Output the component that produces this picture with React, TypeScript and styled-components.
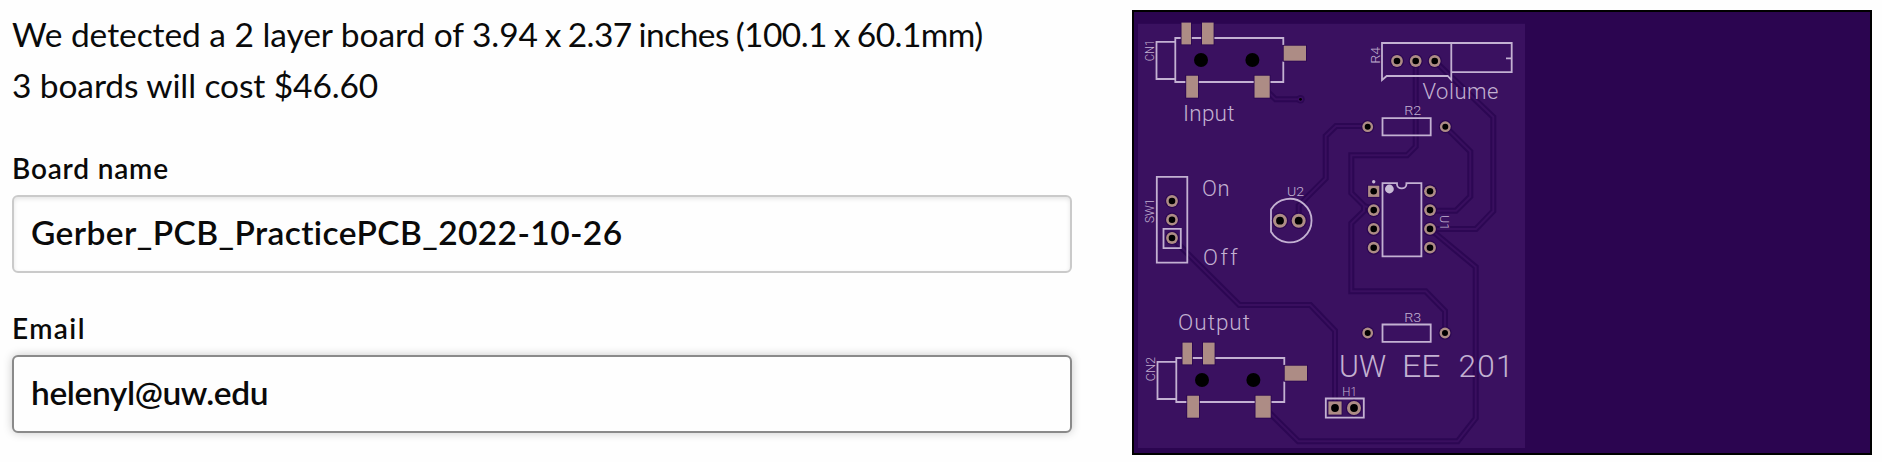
import React from 'react';
import styled, { createGlobalStyle } from 'styled-components';

const GlobalStyle = createGlobalStyle`
  *, *::before, *::after { box-sizing: border-box; }
  body {
    margin: 0;
    background: #fefefe;
    color: #0a0a0a;
    font-family: Lato, "Open Sans", sans-serif;
  }
`;

const Page = styled.main`
  display: flex;
  align-items: flex-start;
  justify-content: space-between;
  height: 462px;
  padding: 10px 10px 7px 12px;
  overflow: hidden;
`;

const Details = styled.section`
  display: flex;
  flex-direction: column;
  width: 1060px;
`;

const Summary = styled.div`
  height: 138px;
  margin-top: -1px;
`;

const SummaryLine = styled.p<{ $tracking: number }>`
  margin: 0;
  font-size: 33.5px;
  line-height: 51px;
  white-space: nowrap;
  letter-spacing: ${(p) => p.$tracking}px;
`;

const Dimensions = styled.span`
  letter-spacing: -0.55px;
  word-spacing: -1.2px;
`;

const Field = styled.div`
  display: flex;
  flex-direction: column;
  height: 160px;
`;

const Label = styled.label<{ $tracking: number }>`
  height: 48px;
  font-size: 28px;
  font-weight: 600;
  line-height: 42px;
  letter-spacing: ${(p) => p.$tracking}px;
`;

const TextInput = styled.input<{ $tracking: number; $active?: boolean }>`
  width: 100%;
  height: 78px;
  padding: 0 16px 4px 17px;
  border: 2px solid ${(p) => (p.$active ? '#8a8a8a' : '#cacaca')};
  border-radius: 6px;
  outline: none;
  background: #fefefe;
  box-shadow: ${(p) =>
    p.$active ? '0 0 10px #cacaca' : 'inset 0 2px 4px rgba(10, 10, 10, 0.1)'};
  color: #0a0a0a;
  font-family: inherit;
  font-size: 33.5px;
  font-weight: 600;
  letter-spacing: ${(p) => p.$tracking}px;
`;

const BoardFrame = styled.figure`
  width: 740px;
  height: 445px;
  margin: 0;
  border: 2px solid #000;
  background: #2b0550;
`;

const BoardDrawing = styled.svg`
  display: block;
  width: 736px;
  height: 441px;
`;

const Outline = styled.path`
  fill: none;
  stroke: #c3b1d2;
  stroke-width: 1.8;
`;

const SilkText = styled.text<{ $weight: number }>`
  fill: #c3b1d2;
  font-family: Roboto, sans-serif;
  font-weight: ${(p) => p.$weight};
`;

const Groove = styled.path`
  fill: none;
  stroke: #2c0753;
  stroke-width: 6;
`;

const Core = styled.path`
  fill: none;
  stroke: #390f5f;
  stroke-width: 2;
`;

const Copper = styled.rect`
  fill: #ad8c85;
  stroke: #2a0650;
  stroke-width: 1.6;
  paint-order: stroke;
`;

const Ring = styled.circle`
  fill: #ad8c85;
  stroke: #2a0650;
  stroke-width: 2.4;
  paint-order: stroke;
`;

const Drill = styled.circle`
  fill: #000;
`;

const traces = [
  'M1262 86L1275.5 99.3H1300.5',
  'M1415.7 61V146.5L1407 155.3H1351.3V193L1364 205.5V211L1351.3 223.3V291.3H1425.7L1445 311V333',
  'M1364 206L1374 209',
  'M1434.7 61L1493.3 117V211L1476 229H1430',
  'M1445.3 126.7L1470.3 151.5V196.5L1456 210.7H1430',
  'M1367.7 126H1336L1325.7 136V178.5L1298.7 205.5V220.7',
  'M1172 238L1239.3 305H1310.3L1335 330.7V408',
  'M1430 229L1475.7 267V418.3L1457.7 441.3H1298.3L1262 405.3',
];

type PadProps = { x: number; y: number; r?: number; hole?: number; square?: boolean };

function Pad({ x, y, r = 5.9, hole = 3.3, square }: PadProps) {
  return (
    <g>
      {square ? (
        <Copper x={x - r} y={y - r} width={r * 2} height={r * 2} />
      ) : (
        <Ring cx={x} cy={y} r={r} />
      )}
      <Drill cx={x} cy={y} r={hole} />
    </g>
  );
}

type SilkProps = {
  x: number;
  y: number;
  size: number;
  width: number;
  rotate?: number;
  weight?: number;
  spaced?: boolean;
  children: string;
};

function Silk({ x, y, size, width, rotate = 0, weight = 300, spaced, children }: SilkProps) {
  return (
    <SilkText
      $weight={weight}
      transform={`translate(${x} ${y}) rotate(${rotate})`}
      fontSize={size}
      textLength={width}
      lengthAdjust={spaced ? 'spacing' : 'spacingAndGlyphs'}
    >
      {children}
    </SilkText>
  );
}

function Jack({ dx = 0, dy = 0 }: { dx?: number; dy?: number }) {
  return (
    <g transform={`translate(${dx} ${dy})`}>
      <Outline d="M1283.3 45V38H1175.3V82H1283.3V61.5M1175.3 41.8H1156.5V79H1175.3" />
      <Copper x={1181.5} y={22.6} width={9.5} height={21.8} />
      <Copper x={1202} y={22.6} width={11.6} height={21.8} />
      <Copper x={1283.7} y={45.7} width={22.3} height={15} />
      <Copper x={1186.2} y={75.7} width={11.8} height={22} />
      <Copper x={1254.5} y={75.7} width={15.2} height={22} />
      <Drill cx={1201} cy={60} r={7} />
      <Drill cx={1252.4} cy={60} r={7} />
    </g>
  );
}

function Board() {
  return (
    <BoardFrame>
      <BoardDrawing viewBox="1134 12 736 441" role="img">
        <rect x={1138} y={23.8} width={387} height={424.2} fill="#3a1160" />
        {traces.map((d) => (
          <Groove key={d} d={d} />
        ))}
        <circle cx={1300.5} cy={99.3} r={4.2} fill="#2c0753" />
        {traces.map((d) => (
          <Core key={d} d={d} />
        ))}
        <circle cx={1300.5} cy={99.3} r={2.6} fill="#390f5f" />
        <Drill cx={1300.5} cy={99.3} r={1.4} />

        <Jack />
        <Jack dx={1} dy={320} />
        <Silk x={1154.3} y={61.3} size={12.2} width={21.5} rotate={-90}>CN1</Silk>
        <Silk x={1155.3} y={381.3} size={12.2} width={24.5} rotate={-90}>CN2</Silk>
        <Silk x={1183} y={121} size={22.5} width={51.5} spaced>Input</Silk>
        <Silk x={1178} y={330.3} size={22.5} width={72} spaced>Output</Silk>

        <Outline d="M1382 43H1451.3V80L1447.7 76H1386.7L1382 80ZM1451.3 43H1511.7V72.2H1451.3M1506 58.3H1511.7" />
        <Pad x={1397} y={61} />
        <Pad x={1415.7} y={61} />
        <Pad x={1434.7} y={61} />
        <Silk x={1380} y={63.8} size={12.2} width={17} rotate={-90}>R4</Silk>
        <Silk x={1422.5} y={99} size={22} width={76} spaced>Volume</Silk>

        <Outline d="M1382.5 118.2H1430.7V135.3H1382.5Z" />
        <Pad x={1367.7} y={126.7} r={5.4} hole={3} />
        <Pad x={1445.3} y={126.7} r={5.4} hole={3} />
        <Silk x={1404.3} y={115.4} size={12.2} width={17}>R2</Silk>

        <Outline d="M1382.5 324.5H1430.7V341.8H1382.5Z" />
        <Pad x={1367.7} y={333} r={5.4} hole={3} />
        <Pad x={1445} y={333} r={5.4} hole={3} />
        <Silk x={1404.3} y={322} size={12.2} width={17}>R3</Silk>

        <Outline d="M1156.8 176.8H1187.3V262.7H1156.8ZM1163.5 228.8H1180.8V248.2H1163.5Z" />
        <Pad x={1172} y={201} />
        <Pad x={1172} y={219.7} />
        <Pad x={1172} y={238} />
        <Silk x={1154} y={223} size={12.2} width={24.5} rotate={-90}>SW1</Silk>
        <Silk x={1202} y={196} size={22} width={27.5} spaced>On</Silk>
        <Silk x={1203} y={265.3} size={22} width={34.5} spaced>Off</Silk>

        <Outline d="M1271 209.5A21.8 21.8 0 1 1 1271 231.7Z" />
        <Pad x={1280} y={220.7} r={7} hole={3.9} />
        <Pad x={1298.7} y={220.7} r={7} hole={3.9} />
        <Silk x={1287} y={196} size={12.2} width={17}>U2</Silk>

        <Outline d="M1382.5 183.2H1397V184.5A4.7 3.8 0 0 0 1406.4 184.5V183.2H1421.4V256.3H1382.5Z" />
        <circle cx={1389.4} cy={189} r={4.4} fill="#c9bbd6" />
        <circle cx={1373.7} cy={181.8} r={1.7} fill="#c9bbd6" />
        <Pad x={1373.7} y={191.3} r={5.6} square />
        <Pad x={1373.7} y={210.1} />
        <Pad x={1373.7} y={228.9} />
        <Pad x={1373.7} y={247.7} />
        <Pad x={1430} y={191.3} />
        <Pad x={1430} y={210.1} />
        <Pad x={1430} y={228.9} />
        <Pad x={1430} y={247.7} />
        <Silk x={1440} y={215} size={12.2} width={15} rotate={90}>U1</Silk>

        <Outline d="M1325.8 398.5H1363.8V417.6H1325.8Z" />
        <Pad x={1335} y={408} r={6.6} hole={3.9} square />
        <Pad x={1354} y={408} r={7} hole={3.9} />
        <Silk x={1342.3} y={396.3} size={12.2} width={14.5}>H1</Silk>

        <Silk x={1339} y={376.6} size={31.5} width={47}>UW</Silk>
        <Silk x={1402} y={376.6} size={31.5} width={38.5}>EE</Silk>
        <Silk x={1458.5} y={376.6} size={31.5} width={55} spaced>201</Silk>
      </BoardDrawing>
    </BoardFrame>
  );
}

export default function App() {
  return (
    <>
      <GlobalStyle />
      <Page>
        <Details>
          <Summary>
            <SummaryLine $tracking={-0.05}>
              We detected a 2 layer board of 3.94
              <Dimensions> x 2.37 inches (100.1 x 60.1mm)</Dimensions>
            </SummaryLine>
            <SummaryLine $tracking={-0.1}>3 boards will cost $46.60</SummaryLine>
          </Summary>
          <Field>
            <Label htmlFor="board-name" $tracking={0.82}>Board name</Label>
            <TextInput
              id="board-name"
              $tracking={0.4}
              defaultValue="Gerber_PCB_PracticePCB_2022-10-26"
            />
          </Field>
          <Field>
            <Label htmlFor="email" $tracking={1.4}>Email</Label>
            <TextInput id="email" $tracking={-0.4} $active defaultValue="helenyl@uw.edu" />
          </Field>
        </Details>
        <Board />
      </Page>
    </>
  );
}
